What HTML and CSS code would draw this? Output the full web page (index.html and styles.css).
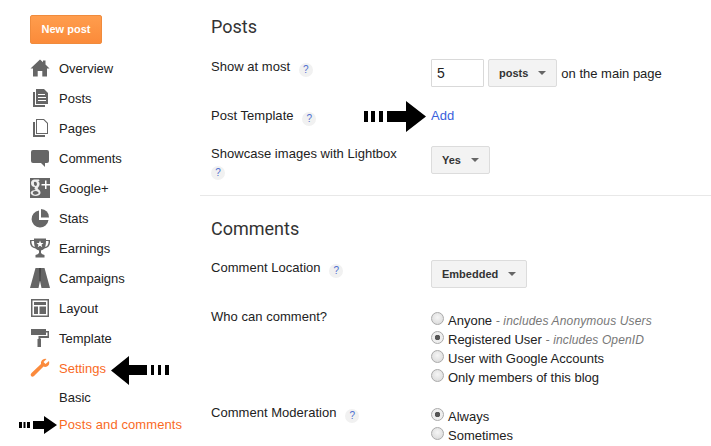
FILE: index.html
```html
<!DOCTYPE html>
<html>
<head>
    <meta charset="UTF-8">
    <title>Settings - Posts and comments</title>
    <link rel="stylesheet" href="styles.css">
</head>
<body>
    <div class="page">
        <div class="sidebar">
            <a class="new-post">New post</a>
            <ul class="nav">
                <li><svg class="icon" viewBox="0 0 20 20"><path d="M10 1.500 L13 4.300 V2.500 H15.500 V6.500 L19.500 10.500 H17 V18.500 H12.300 V13 H7.700 V18.500 H3 V10.500 H0.500 Z"/></svg>Overview</li>
                <li><svg class="icon" viewBox="0 0 20 20"><path d="M6 1 H14 L18 5 V16 H6 Z M8 6 V7 H15 V6 Z M8 9 V10 H16 V9 Z M8 12 V13 H16 V12 Z" fill-rule="evenodd"/><path d="M3 4 H5 V17 H15 V19 H3 Z"/></svg>Posts</li>
                <li><svg class="icon" viewBox="0 0 20 20"><path d="M6 1 H14 L18 5 V16 H6 Z M7 2 V15 H17 V5.500 L13.500 2 Z" fill-rule="evenodd"/><path d="M3 4 H5 V17 H15 V19 H3 Z"/></svg>Pages</li>
                <li><svg class="icon" viewBox="0 0 20 20"><path d="M3 2 H17 Q19 2 19 4 V13 Q19 15 17 15 H15 V19 L11 15 H3 Q1 15 1 13 V4 Q1 2 3 2 Z"/></svg>Comments</li>
                <li><svg class="icon" viewBox="0 0 20 20"><path d="M0 0 H20 V20 H0 Z"/><path d="M13 6 H15 V2.500 H16.500 V6 H20 V7.500 H16.500 V11 H15 V7.500 H11.500 V6 Z" fill="#fff"/><path d="M9 1.500 H4 Q1 2 1 5 Q1 9 5 9 Q3.500 11 6 12 Q1 12 0.500 15 Q1.500 18 6 18 Q11 17.500 10.500 14 Q10 12 8 11 Q7 10 8.500 9 Q10 7.500 9.500 5 Q9 3.500 8 3 H9.500 Z M4 4 Q6.500 3 7 6 Q7 8 5.500 8 Q3.500 7.500 4 4 Z M5.500 13 Q9 13.500 8.500 15.500 Q7 17 4 16.500 Q2 15 3 14 Q4 13 5.500 13 Z" fill="#eee" fill-rule="evenodd"/></svg>Google+</li>
                <li><svg class="icon" viewBox="0 0 20 20"><path d="M9 2.500 A8.500 8.500 0 1 0 18.500 12 H9 Z"/><path d="M11 1 A8 8 0 0 1 19 9.500 H11 Z"/></svg>Stats</li>
                <li><svg class="icon" viewBox="0 0 20 20"><path d="M4 0.500 H16 V2 H20 V5 Q19.500 9.500 14.500 10.500 Q13 12 11 12.500 V15 Q12 16.500 14.500 17 V19.500 H5.500 V17 Q8 16.500 9 15 V12.500 Q7 12 5.500 10.500 Q0.500 9.500 0 5 V2 H4 Z M1.500 3 V5 Q2 8 4.800 9 Q4 6 4 3 Z M18.500 3 H16 Q16 6 15.200 9 Q18 8 18.500 5 Z" fill-rule="evenodd"/><path d="M10 2.500 L11 5 L13.500 5 L11.500 6.800 L12.300 9.300 L10 7.800 L7.700 9.300 L8.500 6.800 L6.500 5 L9 5 Z" fill="#fff"/></svg>Earnings</li>
                <li><svg class="icon" viewBox="0 0 20 20"><path d="M5.500 0 H14.500 L20 20 H11.500 L10 13 L8.500 20 H0 Z"/><path d="M9 0 H11 L10.500 13 H9.500 Z" fill="#444"/></svg>Campaigns</li>
                <li><svg class="icon" viewBox="0 0 20 20"><path d="M1 1 H19 V19 H1 Z M2.500 2.500 V17.500 H17.500 V2.500 Z" fill-rule="evenodd"/><path d="M4 4 H16 V7 H4 Z M4 8.500 H8 V16 H4 Z M9.500 8.500 H16 V16 H9.500 Z"/></svg>Layout</li>
                <li><svg class="icon" viewBox="0 0 20 20"><path d="M1 1 H16 V3 H19 V10 H10.500 V11 H11 V19 H7.500 V11 H8.500 V8 H17.500 V4.500 H16 V7 H1 Z"/></svg>Template</li>
                <li class="active"><svg class="icon" viewBox="0 0 20 20"><path d="M19 3 Q20 7 17 8.500 Q15 9.300 13.500 8.500 L4 18 Q2.500 19.500 1 18 Q0 16.500 1.500 15 L11 6 Q10.500 3 13 1.500 Q14.500 0.500 16.500 1 L13.500 4 L15.500 6 Z"/></svg>Settings</li>
                <li class="sub">Basic</li>
                <li class="sub current">Posts and comments</li>
            </ul>
        </div>

        <div class="main">
            <div class="section posts">
                <h2>Posts</h2>
                <div class="row">
                    <div class="label">Show at most <span class="help">?</span></div>
                    <div class="control">
                        <span class="text-input">5</span>
                        <span class="dropdown">posts<i class="caret"></i></span>
                        <span>on the main page</span>
                    </div>
                </div>
                <div class="row">
                    <div class="label">Post Template <span class="help">?</span></div>
                    <div class="control"><a class="link">Add</a></div>
                </div>
                <div class="row">
                    <div class="label">Showcase images with Lightbox <span class="help wrapped">?</span></div>
                    <div class="control"><span class="dropdown">Yes<i class="caret"></i></span></div>
                </div>
            </div>

            <div class="section comments">
                <h2>Comments</h2>
                <div class="row">
                    <div class="label">Comment Location <span class="help">?</span></div>
                    <div class="control"><span class="dropdown">Embedded<i class="caret"></i></span></div>
                </div>
                <div class="row">
                    <div class="label">Who can comment?</div>
                    <ul class="radios">
                        <li><i class="radio"></i>Anyone <em>- includes Anonymous Users</em></li>
                        <li><i class="radio on"></i>Registered User <em>- includes OpenID</em></li>
                        <li><i class="radio"></i>User with Google Accounts</li>
                        <li><i class="radio"></i>Only members of this blog</li>
                    </ul>
                </div>
                <div class="row">
                    <div class="label">Comment Moderation <span class="help">?</span></div>
                    <ul class="radios">
                        <li><i class="radio on"></i>Always</li>
                        <li><i class="radio"></i>Sometimes</li>
                    </ul>
                </div>
            </div>
        </div>

        <!-- dashed arrows drawn over the screenshot -->
        <svg class="arrow arrow-add" viewBox="0 0 62 31"><path d="M0 10 H4 V21 H0 Z M7 10 H11 V21 H7 Z M15 10 H19 V21 H15 Z M23 10 H42 V0 L62 15.500 L42 31 V21 H23 Z"/></svg>
        <svg class="arrow arrow-settings" viewBox="0 0 58 29"><path d="M0 14.500 L18 0 V9 H36 V19 H18 V29 Z M40 9 H43 V19 H40 Z M47 9 H50 V19 H47 Z M54 9 H58 V19 H54 Z"/></svg>
        <svg class="arrow arrow-posts" viewBox="0 0 38 18"><path d="M0 6 H3 V12 H0 Z M4.500 6 H6.500 V12 H4.500 Z M8 6 H11 V12 H8 Z M14 5 H25 V0 L38 9 L25 18 V13 H14 Z"/></svg>
    </div>
</body>
</html>
```

FILE: styles.css
```css
html, body {
    margin: 0;
    height: 100%;
    overflow: hidden;
    background: #fff;
}

body {
    font-family: "Liberation Sans", Arial, sans-serif;
    font-size: 13px;
    color: #222;
}

ul {
    list-style: none;
    margin: 0;
    padding: 0;
}

.page {
    position: relative;
    display: flex;
    width: 711px;
    height: 446px;
    overflow: hidden;
}

.sidebar {
    width: 200px;
    flex: none;
    padding: 15px 0 0 30px;
    box-sizing: border-box;
}

.new-post {
    display: block;
    width: 72px;
    height: 29px;
    box-sizing: border-box;
    border: 1px solid #f08b3c;
    border-radius: 2px;
    background: linear-gradient(#ff9d4d, #fb8b3a);
    color: #fff;
    font-size: 11px;
    font-weight: bold;
    line-height: 27px;
    text-align: center;
}

.nav {
    margin-top: 9px;
}

.nav li {
    display: flex;
    align-items: center;
    height: 30px;
    color: #222;
}

.nav .icon {
    width: 20px;
    height: 20px;
    margin-right: 9px;
    flex: none;
    fill: #666;
}

.nav .active {
    color: #f96a1f;
}

.nav .active .icon {
    fill: #fb8a3c;
}

.nav .sub {
    height: 28px;
    padding-left: 29px;
}

.nav .current {
    height: 27px;
    color: #f96a1f;
    letter-spacing: 0.1px;
}

.main {
    flex: 1;
}

.section {
    padding-left: 11px;
}

.posts {
    padding-top: 17px;
    height: 178px;
    border-bottom: 1px solid #e8e8e8;
}

.comments {
    padding-top: 23px;
}

h2 {
    margin: 0;
    font-family: Roboto, Arial, sans-serif;
    font-size: 18px;
    font-weight: 400;
    line-height: 20px;
    color: #333;
}

.row {
    display: flex;
    align-items: flex-start;
}

.label {
    width: 220px;
    padding-right: 30px;
    box-sizing: border-box;
    flex: none;
    line-height: 16px;
    letter-spacing: 0.03px;
}

.control {
    display: flex;
    align-items: center;
    gap: 4px;
}

.posts .row:nth-of-type(1) {
    margin-top: 22px;
}

.posts .row:nth-of-type(2) {
    margin-top: 21px;
}

.posts .row:nth-of-type(3) {
    margin-top: 20px;
}

.comments .row:nth-of-type(1) {
    margin-top: 21px;
}

.comments .row:nth-of-type(2) {
    margin-top: 21px;
}

.comments .row:nth-of-type(3) {
    margin-top: 18px;
}

.help {
    display: inline-block;
    width: 14px;
    height: 14px;
    margin-left: 5px;
    border-radius: 50%;
    background: #f1f1f1;
    color: #4d6fd0;
    font-size: 10px;
    line-height: 14px;
    text-align: center;
    vertical-align: -2px;
}

.help.wrapped {
    margin-left: 0;
}

.text-input {
    width: 53px;
    height: 28px;
    box-sizing: border-box;
    border: 1px solid #d9d9d9;
    border-radius: 1px;
    padding-left: 5px;
    font-size: 14px;
    line-height: 26px;
}

.dropdown {
    display: inline-flex;
    align-items: center;
    height: 28px;
    box-sizing: border-box;
    padding: 0 10px;
    border: 1px solid #dcdcdc;
    border-radius: 2px;
    background: #f3f3f3;
    color: #333;
    font-size: 11px;
    font-weight: bold;
}

.caret {
    width: 0;
    height: 0;
    margin-left: 10px;
    border-left: 4px solid transparent;
    border-right: 4px solid transparent;
    border-top: 4px solid #666;
}

.link {
    color: #3a5fdc;
    line-height: 16px;
    font-size: 13px;
}

.radios {
    margin-top: 2px;
}

.radios li {
    display: flex;
    align-items: center;
    height: 19px;
    white-space: pre;
}

.radios em {
    color: #777;
    font-size: 12px;
    letter-spacing: 0.15px;
}

.radio {
    width: 13px;
    height: 13px;
    box-sizing: border-box;
    margin: 0 4px 4px 0;
    border: 1px solid #aaa;
    border-radius: 50%;
    background: radial-gradient(circle at 50% 40%, #f5f5f5, #d6d6d6);
    flex: none;
}

.radio.on {
    background: radial-gradient(circle, #555 0 2.5px, #eee 3px);
}

.arrow {
    position: absolute;
    fill: #000;
}

.arrow-add {
    left: 364px;
    top: 101px;
    width: 62px;
    height: 31px;
}

.arrow-settings {
    left: 111px;
    top: 356px;
    width: 58px;
    height: 29px;
}

.arrow-posts {
    left: 19px;
    top: 416px;
    width: 38px;
    height: 18px;
}
```
